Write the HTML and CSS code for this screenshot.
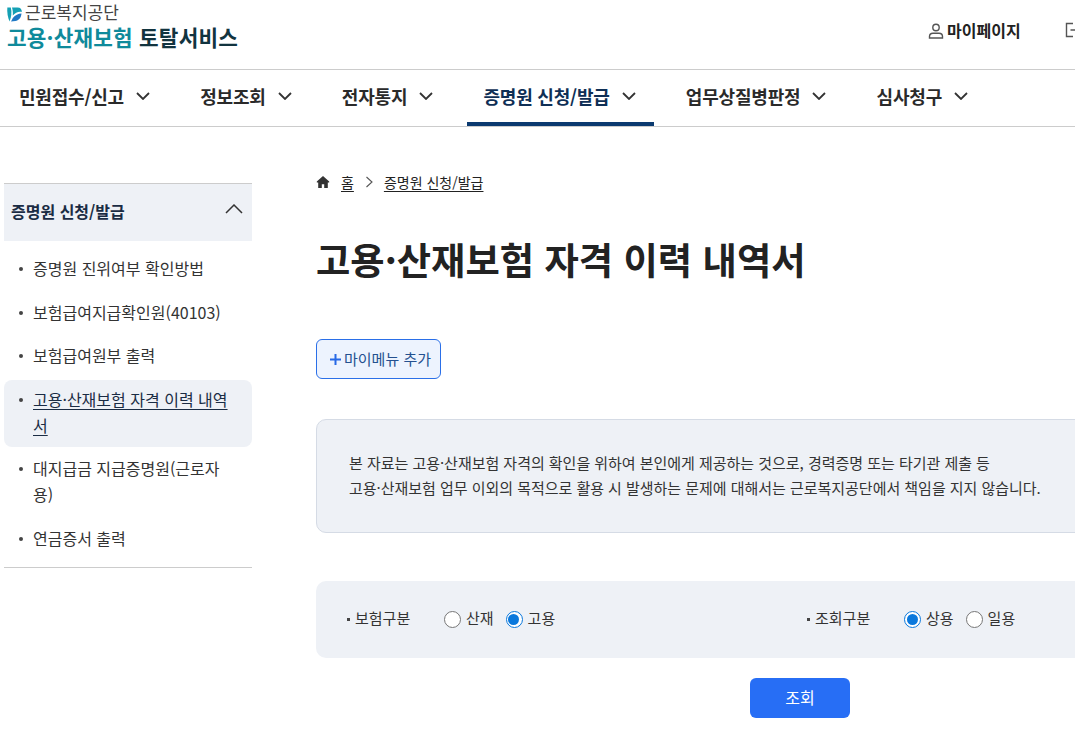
FILE: index.html
```html
<!DOCTYPE html>
<html lang="ko">
<head>
    <meta charset="UTF-8">
    <meta name="viewport" content="width=device-width, initial-scale=1.0">
    <title>고용·산재보험 자격 이력 내역서</title>
    <link rel="stylesheet" href="styles.css">
</head>
<body>
    <div class="page">
        <div class="header">
            <div class="logo">
                <div class="logo-org">
                    <svg class="logo-mark" width="15" height="15" viewBox="0 0 15 15">
                        <path d="M.3.500h3.500c1.200 4.500.6 9.500-1.300 14C.8 10.500 0 5.500.3.500z" fill="#14a0b4"/>
                        <path d="M5 .5h5.500c3 0 4.500 1.800 4.300 4.500-3-.8-6.500.5-9 3.500C6 6 5.800 3 5 .5z" fill="#14a0b4"/>
                        <path d="M14.500 6.500c-.3 4.500-3 7-6 7.500-1.500.2-3 .3-4.500.5 .7-1 1.300-2.300 1.800-3.500 2.500-2.800 5.500-4.500 8.700-4.500z" fill="#1f78c4"/>
                    </svg>
                    <span>근로복지공단</span>
                </div>
                <div class="logo-title"><span class="logo-teal">고용·산재보험</span> 토탈서비스</div>
            </div>
            <div class="util">
                <a class="util-link">
                    <svg width="18" height="18" viewBox="0 0 18 18" fill="none" stroke="#555" stroke-width="1.400">
                        <circle cx="9" cy="5.500" r="3.200"/>
                        <path d="M2.500 16v-1.500c0-2 1.500-3.200 3.500-3.200h6c2 0 3.500 1.200 3.500 3.200V16z"/>
                    </svg>
                    <span class="util-text">마이페이지</span>
                </a>
                <svg class="util-logout" width="18" height="18" viewBox="0 0 18 18" fill="none" stroke="#555" stroke-width="1.400">
                    <path d="M9 2.500H2.500v13H9M6.500 9H16"/>
                </svg>
            </div>
        </div>

        <div class="nav">
            <div class="nav-item">민원접수/신고 <svg class="chev" viewBox="0 0 14 8"><path d="M1 1l6 6 6-6"/></svg></div>
            <div class="nav-item">정보조회 <svg class="chev" viewBox="0 0 14 8"><path d="M1 1l6 6 6-6"/></svg></div>
            <div class="nav-item">전자통지 <svg class="chev" viewBox="0 0 14 8"><path d="M1 1l6 6 6-6"/></svg></div>
            <div class="nav-item active">증명원 신청/발급 <svg class="chev" viewBox="0 0 14 8"><path d="M1 1l6 6 6-6"/></svg></div>
            <div class="nav-item">업무상질병판정 <svg class="chev" viewBox="0 0 14 8"><path d="M1 1l6 6 6-6"/></svg></div>
            <div class="nav-item">심사청구 <svg class="chev" viewBox="0 0 14 8"><path d="M1 1l6 6 6-6"/></svg></div>
        </div>

        <div class="content">
            <div class="sidebar">
                <div class="side-title">
                    <span>증명원 신청/발급</span>
                    <svg class="side-chev" viewBox="0 0 18 10"><path d="M1 9l8-8 8 8"/></svg>
                </div>
                <ul class="side-list">
                    <li>증명원 진위여부 확인방법</li>
                    <li>보험급여지급확인원(40103)</li>
                    <li>보험급여원부 출력</li>
                    <li class="current"><span>고용·산재보험 자격 이력 내역서</span></li>
                    <li>대지급금 지급증명원(근로자용)</li>
                    <li>연금증서 출력</li>
                </ul>
            </div>

            <div class="main">
                <div class="crumbs">
                    <svg class="crumb-home" width="14" height="14" viewBox="0 0 14 14"><path d="M7 1L.8 6.500v1h1.400V13h3.600V9.200h2.400V13h3.600V7.500h1.400v-1z" fill="#333"/></svg>
                    <a>홈</a>
                    <svg class="crumb-sep" width="9" height="12" viewBox="0 0 9 12"><path d="M1.500 1l5.500 5-5.500 5" fill="none" stroke="#555" stroke-width="1.100"/></svg>
                    <a>증명원 신청/발급</a>
                </div>
                <h1 class="page-title">고용·산재보험 자격 이력 내역서</h1>
                <button class="mymenu">
                    <svg width="11" height="11" viewBox="0 0 11 11"><path d="M5.500 0v11M0 5.500h11" stroke="#2668e6" stroke-width="2"/></svg>
                    마이메뉴 추가
                </button>
                <div class="notice">
                    <p>본 자료는 고용·산재보험 자격의 확인을 위하여 본인에게 제공하는 것으로, 경력증명 또는 타기관 제출 등</p>
                    <p>고용·산재보험 업무 이외의 목적으로 활용 시 발생하는 문제에 대해서는 근로복지공단에서 책임을 지지 않습니다.</p>
                </div>
                <div class="search">
                    <div class="field field-type">
                        <span class="field-label">보험구분</span>
                        <label class="radio"><span class="dot"></span>산재</label>
                        <label class="radio"><span class="dot on"></span>고용</label>
                    </div>
                    <div class="field">
                        <span class="field-label">조회구분</span>
                        <label class="radio"><span class="dot on"></span>상용</label>
                        <label class="radio"><span class="dot"></span>일용</label>
                    </div>
                </div>
                <div class="actions">
                    <button class="search-btn">조회</button>
                </div>
            </div>
        </div>
    </div>
</body>
</html>
```

FILE: styles.css
```css
html, body {
    margin: 0;
    height: 100%;
    overflow: hidden;
    background: #fff;
}
body {
    font-family: "Noto Sans CJK KR", "Noto Sans", sans-serif;
    color: #222;
}
.page {
    width: 1075px;
    height: 729px;
    overflow: hidden;
}
.header {
    height: 69px;
    border-bottom: 1px solid #ccc;
    display: flex;
    justify-content: space-between;
}
.logo {
    padding: 2px 0 0 7px;
}
.logo-org {
    display: flex;
    align-items: center;
    gap: 3px;
    font-size: 17px;
    line-height: 20px;
    color: #444;
}
.logo-mark {
    margin-top: 4px;
}
.logo-title {
    font-size: 21.300px;
    line-height: 28px;
    font-weight: 700;
    color: #12343f;
    margin-top: 1px;
    letter-spacing: 0.2px;
}
.logo-teal {
    color: #0f8a9b;
}
.util {
    display: flex;
    align-items: flex-start;
    padding-top: 20px;
    gap: 43px;
    width: 148px;
    flex-shrink: 0;
}
.util-link {
    display: flex;
    align-items: center;
    gap: 2px;
    font-size: 16px;
    line-height: 20px;
    font-weight: 700;
    white-space: nowrap;
    color: #222;
}
.util-text {
    padding-bottom: 2px;
}
.util-logout {
    flex-shrink: 0;
    margin-top: 1px;
}
.nav {
    height: 56px;
    border-bottom: 1px solid #ccc;
    display: flex;
    padding-left: 3px;
}
.nav-item {
    display: flex;
    align-items: center;
    gap: 12px;
    padding: 0 18px 0 16px;
    margin-right: 16.200px;
    font-size: 18px;
    font-weight: 700;
    letter-spacing: -0.2px;
    color: #2a2a2a;
    white-space: nowrap;
    box-sizing: border-box;
    height: 56px;
    border-bottom: 4px solid transparent;
}
.nav-item.active {
    border-bottom-color: #0b3a70;
    color: #0f2f55;
}
.chev {
    width: 14px;
    height: 8px;
    fill: none;
    stroke: #333;
    stroke-width: 1.800;
}
.content {
    display: flex;
    padding: 56px 0 0 4px;
}
.sidebar {
    width: 248px;
    flex-shrink: 0;
    border-bottom: 1px solid #ccc;
    align-self: flex-start;
    padding-bottom: 5px;
}
.side-title {
    height: 58px;
    background: #eef1f6;
    border-top: 1px solid #ccc;
    box-sizing: border-box;
    display: flex;
    align-items: center;
    justify-content: space-between;
    padding: 0 9px 4px 7px;
    font-size: 16px;
    font-weight: 700;
    color: #1a2c44;
}
.side-chev {
    width: 18px;
    height: 10px;
    fill: none;
    stroke: #333;
    stroke-width: 1.500;
    margin-bottom: 4px;
}
.side-list {
    list-style: none;
    margin: 8px 0 0;
    padding: 0;
}
.side-list li {
    position: relative;
    padding: 6px 22px 9px 29px;
    margin-bottom: 2.500px;
    font-size: 16px;
    line-height: 26px;
    color: #333;
    word-break: break-all;
}
.side-list li::before {
    content: "";
    position: absolute;
    left: 15px;
    top: 18px;
    width: 4px;
    height: 4px;
    border-radius: 50%;
    background: #444;
}
.side-list li.current {
    background: #eef1f6;
    border-radius: 8px;
    color: #1a2c44;
}
.side-list li.current span {
    text-decoration: underline;
    text-underline-offset: 3px;
}
.main {
    margin-left: 64px;
    width: 820px;
    flex-shrink: 0;
}
.crumbs {
    display: flex;
    align-items: center;
    height: 22px;
    margin-top: -12px;
    font-size: 14px;
    color: #333;
}
.crumbs a {
    text-decoration: underline;
    text-underline-offset: 3px;
    color: #222;
}
.crumb-home {
    margin-right: 11px;
}
.crumb-sep {
    margin: 0 10px 0 11px;
}
.page-title {
    margin: 40px 0 0;
    font-size: 37.300px;
    line-height: 52px;
    font-weight: 700;
    color: #222;
}
.mymenu {
    display: flex;
    align-items: center;
    gap: 3px;
    margin-top: 54px;
    width: 125px;
    height: 40px;
    padding: 0 0 2px 13px;
    border: 1px solid #2a6fe8;
    border-radius: 6px;
    background: #edf3fe;
    font-family: inherit;
    font-size: 15px;
    color: #24508f;
}
.mymenu svg {
    margin-top: 3px;
}
.notice {
    margin-top: 40px;
    height: 114px;
    box-sizing: border-box;
    border: 1px solid #d5dbe5;
    border-radius: 10px;
    background: #eef1f6;
    padding: 30px 0 0 32px;
    font-size: 15px;
    line-height: 25px;
    letter-spacing: -0.03px;
    color: #333;
}
.notice p {
    margin: 0;
}
.search {
    margin-top: 48px;
    height: 77px;
    box-sizing: border-box;
    padding: 0 0 4px 30px;
    border-radius: 10px;
    background: #eef1f6;
    display: flex;
    align-items: center;
    font-size: 15px;
    color: #333;
}
.field {
    display: flex;
    align-items: center;
}
.field-type {
    width: 460px;
}
.field-label {
    position: relative;
    padding-left: 9px;
    width: 98px;
    box-sizing: border-box;
}
.field-label::before {
    content: "";
    position: absolute;
    left: 1px;
    top: 11px;
    width: 3px;
    height: 3px;
    background: #444;
}
.radio {
    display: flex;
    align-items: center;
    gap: 5px;
    margin-right: 12px;
}
.dot {
    width: 17px;
    height: 17px;
    margin-top: 4px;
    box-sizing: border-box;
    border: 1px solid #777;
    border-radius: 50%;
    background: #fff;
    position: relative;
}
.dot.on {
    border: 1.500px solid #0a78dc;
}
.dot.on::after {
    content: "";
    position: absolute;
    left: 1.500px;
    top: 1.500px;
    width: 11px;
    height: 11px;
    border-radius: 50%;
    background: #0a78dc;
}
.actions {
    margin-top: 20px;
    padding-left: 434px;
}
.search-btn {
    width: 100px;
    height: 40px;
    padding: 0 0 2px;
    border: none;
    border-radius: 6px;
    background: #276ef5;
    color: #fff;
    font-family: inherit;
    font-size: 16px;
}
```
